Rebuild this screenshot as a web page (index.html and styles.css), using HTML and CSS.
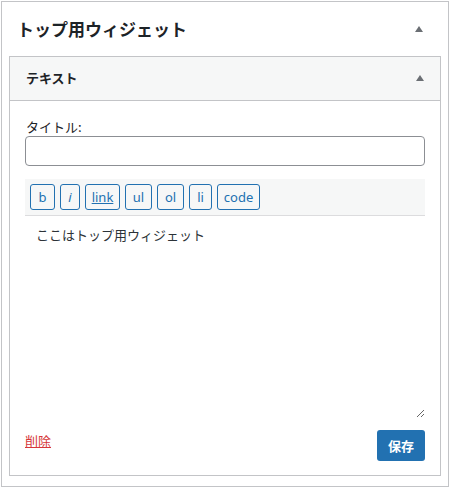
FILE: index.html
```html
<!DOCTYPE html>
<html lang="ja">
<head>
<meta charset="utf-8">
<title>トップ用ウィジェット</title>
<link rel="stylesheet" href="styles.css">
</head>
<body>
<div class="widget">
  <div class="widget-top">
    <h2 class="widget-title">トップ用ウィジェット</h2>
    <span class="toggle"></span>
  </div>
  <div class="inner">
    <div class="inner-top">
      <h3 class="inner-title">テキスト</h3>
      <span class="toggle"></span>
    </div>
    <div class="inner-body">
      <label class="field-label" for="title">タイトル:</label>
      <input class="field-input" id="title" type="text">
      <div class="editor">
        <div class="toolbar">
          <button class="qt qt-b" type="button">b</button>
          <button class="qt qt-i" type="button">i</button>
          <button class="qt qt-link" type="button">link</button>
          <button class="qt qt-ul" type="button">ul</button>
          <button class="qt qt-ol" type="button">ol</button>
          <button class="qt qt-li" type="button">li</button>
          <button class="qt qt-code" type="button">code</button>
        </div>
        <textarea class="content">ここはトップ用ウィジェット</textarea>
      </div>
      <div class="actions">
        <a class="delete" href="#">削除</a>
        <button class="save" type="button">保存</button>
      </div>
    </div>
  </div>
</div>
</body>
</html>
```
FILE: styles.css
```css
* { box-sizing: border-box; }
html, body { margin: 0; padding: 0; background: #fff; }
body {
  font-family: "Noto Sans CJK JP", "Noto Sans", sans-serif;
  color: #1d2327;
  font-size: 13px;
}
.widget {
  margin: 1px 0 0 1px;
  width: 448px;
  height: 486px;
  border: 1px solid #c3c4c7;
  background: #fff;
  padding: 0 7px 10px 7px;
}
.widget-top {
  height: 54px;
  display: flex;
  align-items: center;
  justify-content: space-between;
  margin: 0 -7px;
  padding: 0 25px 0 15px;
}
.widget-title {
  margin: 0;
  font-size: 17px;
  font-weight: 700;
  line-height: 20px;
  color: #1d2327;
}
.toggle {
  width: 0;
  height: 0;
  border-left: 4px solid transparent;
  border-right: 4px solid transparent;
  border-bottom: 6px solid #6b6f74;
}
.inner {
  border: 1px solid #c3c4c7;
  height: 420px;
  display: flex;
  flex-direction: column;
}
.inner-top {
  height: 44px;
  background: #f6f7f7;
  border-bottom: 1px solid #c3c4c7;
  display: flex;
  align-items: center;
  justify-content: space-between;
  padding: 0 16px 1px 16px;
}
.inner-title {
  margin: 0;
  font-size: 13px;
  font-weight: 700;
  line-height: 18px;
}
.inner-body {
  padding: 17px 15px 14px 15px;
  display: flex;
  flex-direction: column;
}
.field-label {
  display: block;
  line-height: 18px;
  padding-left: 1px;
  font-size: 13px;
}
.field-input {
  display: block;
  width: 100%;
  height: 30px;
  border: 1px solid #8c8f94;
  border-radius: 4px;
  padding: 0 8px;
  font: inherit;
  background: #fff;
}
.editor {
  margin-top: 13px;
}
.toolbar {
  height: 37px;
  background: #f6f7f7;
  border-bottom: 1px solid #dcdcde;
  padding: 5px 5px 0 5px;
  display: flex;
  gap: 5px;
  align-items: flex-start;
}
.qt {
  height: 26px;
  padding: 0;
  border: 1px solid #2271b1;
  border-radius: 3px;
  background: #f6f7f7;
  color: #2271b1;
  font-family: "Noto Sans", "Noto Sans CJK JP", sans-serif;
  font-size: 13px;
  line-height: 22px;
  text-align: center;
}
.qt-b { width: 25px; }
.qt-i { width: 20px; font-style: italic; }
.qt-link { width: 35px; text-decoration: underline; }
.qt-ul { width: 27px; }
.qt-ol { width: 27px; }
.qt-li { width: 23px; }
.qt-code { width: 43px; }
.content {
  display: block;
  width: 100%;
  height: 202px;
  border: none;
  outline: none;
  padding: 9px 11px;
  font-family: "Noto Sans CJK JP", sans-serif;
  font-size: 13px;
  line-height: 20px;
  color: #2c3338;
  resize: vertical;
  background: #fff;
}
.actions {
  margin-top: 12px;
  display: flex;
  justify-content: space-between;
  align-items: center;
}
.delete {
  color: #d63638;
  text-decoration: underline;
  font-size: 13px;
  line-height: 18px;
  margin-top: -9px;
}
.save {
  height: 31px;
  padding: 0 11px;
  border: none;
  border-radius: 3px;
  background: #2271b1;
  color: #fff;
  font-family: "Noto Sans CJK JP", sans-serif;
  font-weight: 700;
  font-size: 13px;
}
```
